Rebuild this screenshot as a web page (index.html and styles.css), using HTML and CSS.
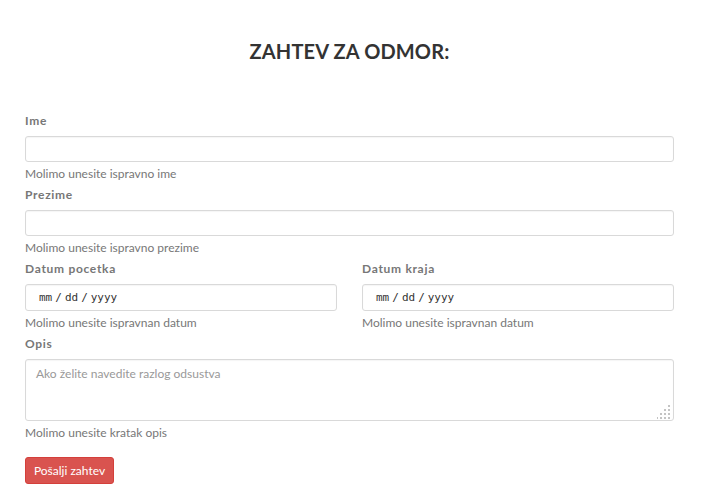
FILE: index.html
```html
<!DOCTYPE html>
<html lang="sr">
<head>
<meta charset="utf-8">
<title>Zahtev za odmor</title>
<link rel="stylesheet" href="styles.css">
</head>
<body>
<div class="page">
  <h1 class="title">ZAHTEV ZA ODMOR:</h1>
  <form class="form">
    <div class="group">
      <label class="label">Ime</label>
      <input class="field" type="text">
      <div class="help">Molimo unesite ispravno ime</div>
    </div>
    <div class="group">
      <label class="label">Prezime</label>
      <input class="field" type="text">
      <div class="help">Molimo unesite ispravno prezime</div>
    </div>
    <div class="row">
      <div class="group">
        <label class="label">Datum pocetka</label>
        <div class="field date"><span>mm</span><span class="sep">/</span><span>dd</span><span class="sep">/</span><span>yyyy</span></div>
        <div class="help">Molimo unesite ispravnan datum</div>
      </div>
      <div class="group">
        <label class="label">Datum kraja</label>
        <div class="field date"><span>mm</span><span class="sep">/</span><span>dd</span><span class="sep">/</span><span>yyyy</span></div>
        <div class="help">Molimo unesite ispravnan datum</div>
      </div>
    </div>
    <div class="group">
      <label class="label">Opis</label>
      <div class="area-wrap">
        <textarea class="field area" placeholder="Ako želite navedite razlog odsustva"></textarea>
        <svg class="grip" width="14" height="14" viewBox="0 0 14 14" aria-hidden="true">
          <rect x="11" y="0" width="2" height="2"/>
          <rect x="7" y="4" width="2" height="2"/><rect x="11" y="4" width="2" height="2"/>
          <rect x="3" y="8" width="2" height="2"/><rect x="7" y="8" width="2" height="2"/><rect x="11" y="8" width="2" height="2"/>
          <rect x="-1" y="12" width="2" height="2"/><rect x="3" y="12" width="2" height="2"/><rect x="7" y="12" width="2" height="2"/><rect x="11" y="12" width="2" height="2"/>
        </svg>
      </div>
      <div class="help">Molimo unesite kratak opis</div>
    </div>
    <button class="btn" type="button">Pošalji zahtev</button>
  </form>
</div>
</body>
</html>
```
FILE: styles.css
```css
* { box-sizing: border-box; }
html, body { margin: 0; padding: 0; background: #fff; }
body {
  font-family: Lato, "Open Sans", sans-serif;
  color: #333;
}
.page {
  padding: 0 27px 0 25px;
}
.title {
  margin: 0;
  padding-top: 39px;
  height: 112px;
  text-align: center;
  font-size: 20px;
  line-height: 24px;
  font-weight: 700;
  letter-spacing: 0.15px;
  color: #333;
}
.form { display: flex; flex-direction: column; }
.group { display: flex; flex-direction: column; margin-bottom: 3px; }
.row { display: flex; gap: 25px; }
.row .group { flex: 1; }
.label {
  display: block;
  font-size: 12px;
  line-height: 18px;
  font-weight: 700;
  letter-spacing: 0.7px;
  color: #777;
  margin-bottom: 6px;
}
.field {
  display: block;
  width: 100%;
  height: 26px;
  border: 1px solid #d9d9d9;
  border-radius: 3px;
  background: #fff;
  box-shadow: inset 0 1px 1px rgba(0,0,0,0.04);
  font-family: Lato, sans-serif;
  font-size: 12px;
  padding: 4px 10px;
  outline: none;
  color: #333;
}
.date {
  display: flex;
  align-items: center;
  height: 27px;
  font-family: "DejaVu Sans Mono", monospace;
  font-size: 11px;
  padding: 0 0 0 13px;
  color: #333;
}
.sep { margin: 0 3px; }
.area-wrap { position: relative; }
.area {
  height: 62px;
  resize: none;
  padding: 6px 10px;
  font-size: 12px;
  line-height: 16px;
}
.area::placeholder { color: #999; }
.grip {
  position: absolute;
  right: 3px;
  bottom: 2px;
  fill: #c4c4c4;
}
.help {
  font-size: 12px;
  line-height: 18px;
  color: #777;
  margin-top: 3px;
}
.btn {
  align-self: flex-start;
  margin-top: 12px;
  height: 27px;
  width: 89px;
  padding: 0;
  border: 1px solid #d43f3a;
  border-radius: 3px;
  background: #d9534f;
  color: #fff;
  font-family: Lato, sans-serif;
  font-size: 12px;
}
```
